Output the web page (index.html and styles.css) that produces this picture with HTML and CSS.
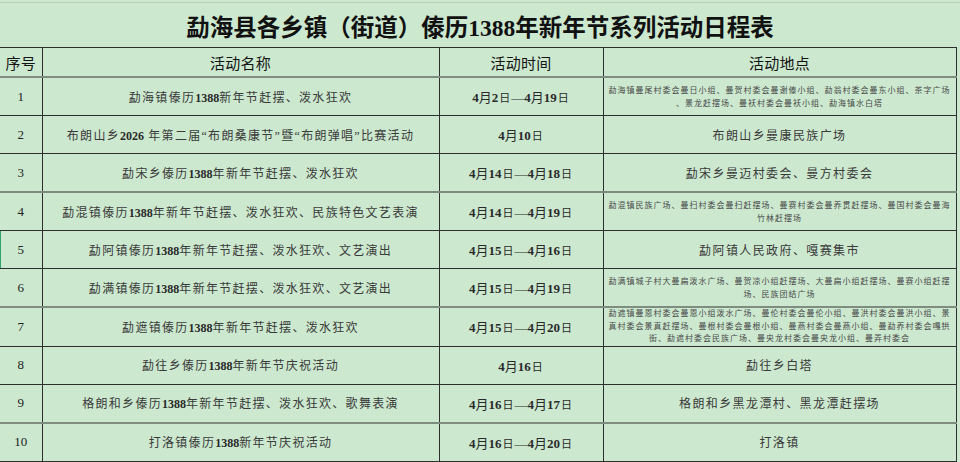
FILE: index.html
```html
<!DOCTYPE html>
<html lang="zh-CN">
<head>
<meta charset="utf-8">
<title>勐海县各乡镇（街道）傣历1388年新年节系列活动日程表</title>
<link rel="stylesheet" href="styles.css">
</head>
<body>
<div class="page">
  <h1 class="title">勐海县各乡镇（街道）傣历1388年新年节系列活动日程表</h1>
  <table class="sched">
    <colgroup>
      <col class="c-no"><col class="c-name"><col class="c-time"><col class="c-place">
    </colgroup>
    <thead>
      <tr class="thick">
        <th class="no">序号</th><th>活动名称</th><th>活动时间</th><th>活动地点</th>
      </tr>
    </thead>
    <tbody>
      <tr>
        <td class="no">1</td>
        <td class="name">勐海镇傣历<b>1388</b>新年节赶摆、泼水狂欢</td>
        <td class="time"><b>4</b>月<b>2</b><i>日</i>—<b>4</b>月<b>19</b><i>日</i></td>
        <td class="place small">勐海镇曼尾村委会曼日小组、曼贺村委会曼谢傣小组、勐翁村委会曼东小组、茶字广场<br>、景龙赶摆场、曼袄村委会曼袄小组、勐海镇水白塔</td>
      </tr>
      <tr>
        <td class="no">2</td>
        <td class="name">布朗山乡<b>2026</b> 年第二届“布朗桑康节”暨“布朗弹唱”比赛活动</td>
        <td class="time"><b>4</b>月<b>10</b><i>日</i></td>
        <td class="place">布朗山乡曼康民族广场</td>
      </tr>
      <tr class="thick">
        <td class="no">3</td>
        <td class="name">勐宋乡傣历<b>1388</b>年新年节赶摆、泼水狂欢</td>
        <td class="time"><b>4</b>月<b>14</b><i>日</i>—<b>4</b>月<b>18</b><i>日</i></td>
        <td class="place">勐宋乡曼迈村委会、曼方村委会</td>
      </tr>
      <tr>
        <td class="no">4</td>
        <td class="name">勐混镇傣历<b>1388</b>年新年节赶摆、泼水狂欢、民族特色文艺表演</td>
        <td class="time"><b>4</b>月<b>14</b><i>日</i>—<b>4</b>月<b>19</b><i>日</i></td>
        <td class="place small">勐混镇民族广场、曼扫村委会曼扫赶摆场、曼赛村委会曼养贯赶摆场、曼国村委会曼海<br>竹林赶摆场</td>
      </tr>
      <tr>
        <td class="no mark">5</td>
        <td class="name">勐阿镇傣历<b>1388</b>年新年节赶摆、泼水狂欢、文艺演出</td>
        <td class="time"><b>4</b>月<b>15</b><i>日</i>—<b>4</b>月<b>16</b><i>日</i></td>
        <td class="place">勐阿镇人民政府、嘎赛集市</td>
      </tr>
      <tr class="thick">
        <td class="no">6</td>
        <td class="name">勐满镇傣历<b>1388</b>年新年节赶摆、泼水狂欢、文艺演出</td>
        <td class="time"><b>4</b>月<b>15</b><i>日</i>—<b>4</b>月<b>19</b><i>日</i></td>
        <td class="place small">勐满镇城子村大曼扁泼水广场、曼贺凉小组赶摆场、大曼扁小组赶摆场、曼赛小组赶摆<br>场、民族团结广场</td>
      </tr>
      <tr>
        <td class="no">7</td>
        <td class="name">勐遮镇傣历<b>1388</b>年新年节赶摆、泼水狂欢</td>
        <td class="time"><b>4</b>月<b>15</b><i>日</i>—<b>4</b>月<b>20</b><i>日</i></td>
        <td class="place small tight">勐遮镇曼恩村委会曼恩小组泼水广场、曼伦村委会曼伦小组、曼洪村委会曼洪小组、景<br>真村委会景真赶摆场、曼根村委会曼根小组、曼燕村委会曼燕小组、曼勐养村委会嘎拱<br>街、勐遮村委会民族广场、曼央龙村委会曼央龙小组、曼弄村委会</td>
      </tr>
      <tr>
        <td class="no">8</td>
        <td class="name">勐往乡傣历<b>1388</b>年新年节庆祝活动</td>
        <td class="time"><b>4</b>月<b>16</b><i>日</i></td>
        <td class="place">勐往乡白塔</td>
      </tr>
      <tr class="thick">
        <td class="no">9</td>
        <td class="name">格朗和乡傣历<b>1388</b>年新年节赶摆、泼水狂欢、歌舞表演</td>
        <td class="time"><b>4</b>月<b>16</b><i>日</i>—<b>4</b>月<b>17</b><i>日</i></td>
        <td class="place">格朗和乡黑龙潭村、黑龙潭赶摆场</td>
      </tr>
      <tr>
        <td class="no">10</td>
        <td class="name">打洛镇傣历<b>1388</b>新年节庆祝活动</td>
        <td class="time"><b>4</b>月<b>16</b><i>日</i>—<b>4</b>月<b>20</b><i>日</i></td>
        <td class="place">打洛镇</td>
      </tr>
    </tbody>
  </table>
</div>
</body>
</html>
```

FILE: styles.css
```css
html, body {
  margin: 0;
  padding: 0;
  background: #cce8cf;
}

.page {
  width: 960px;
  height: 462px;
  overflow: hidden;
  background: #cce8cf;
  padding-top: 2px;
  box-sizing: border-box;
}

.title {
  margin: 0;
  height: 45px;
  border-top: 1px solid #b9cbbb;
  box-sizing: border-box;
  display: flex;
  align-items: center;
  justify-content: center;
  font-family: "Liberation Serif", "Noto Sans CJK SC", serif;
  font-weight: 700;
  font-size: 23.5px;
  color: #111;
  letter-spacing: 0;
  padding-top: 1px;
}

.sched {
  width: 956px;
  border-collapse: collapse;
  table-layout: fixed;
  font-family: "Liberation Serif", "Noto Sans CJK SC", serif;
  color: #3a3a3a;
}

.c-no { width: 42px; }
.c-name { width: 397px; }
.c-time { width: 164px; }
.c-place { width: 353px; }

.sched th,
.sched td {
  border: 1px solid #2e2e2e;
  padding: 0;
  text-align: center;
  vertical-align: middle;
}

.sched th:first-child,
.sched td:first-child {
  border-left: none;
}

.sched th {
  height: 28px;
  font-family: "Noto Sans CJK SC", sans-serif;
  font-weight: 400;
  font-size: 15px;
  color: #141414;
  letter-spacing: 0.3px;
}

.sched td {
  height: 37px;
}

.sched tr.thick th,
.sched tr.thick td {
  border-bottom: 2px solid #7e8d80;
}

.sched td.no {
  font-size: 13px;
  color: #222;
}

.sched td.mark {
  box-shadow: inset 1px 0 0 #2ea36b;
}

.sched td.name {
  font-size: 12px;
  letter-spacing: 1.3px;
}

.sched b {
  font-weight: 700;
  color: #2a2a2a;
  letter-spacing: 0;
}

.sched td.time {
  font-size: 13px;
  color: #2a2a2a;
  letter-spacing: 0;
}

.sched td.time i {
  font-style: normal;
  font-size: 11px;
  padding: 0 1px;
}

.sched td.place {
  font-size: 12px;
  letter-spacing: 1.4px;
}

.sched td.place.small {
  font-size: 8px;
  letter-spacing: 1px;
  line-height: 13px;
  white-space: nowrap;
  color: #4a4a4a;
}

.sched td.place.tight {
  line-height: 12.5px;
}
```
